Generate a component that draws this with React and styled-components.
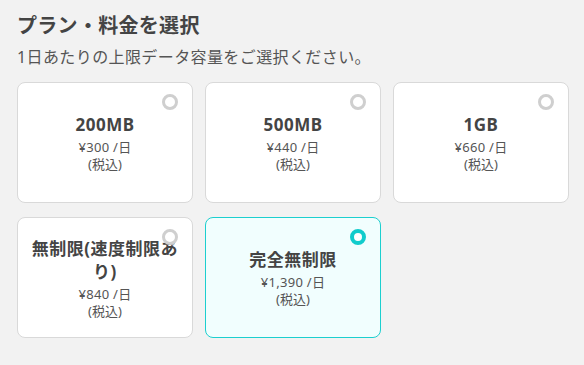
import React, { useState } from "react";
import styled, { createGlobalStyle } from "styled-components";

const GlobalStyle = createGlobalStyle`
  body {
    margin: 0;
    background: #f2f2f2;
    font-family: "Noto Sans", "Noto Sans CJK JP", sans-serif;
  }
`;

const Wrapper = styled.div`
  padding: 11px 14px 0 17px;
`;

const Title = styled.h2`
  margin: 0;
  font-size: 20px;
  line-height: 30px;
  font-weight: 700;
  letter-spacing: 0.3px;
  color: #444;
`;

const Lead = styled.p`
  margin: 3px 0 0;
  font-size: 16px;
  line-height: 26px;
  letter-spacing: 0.4px;
  color: #555;
`;

const Grid = styled.div`
  display: grid;
  grid-template-columns: repeat(3, 176px);
  grid-auto-rows: 121px;
  gap: 14px 12px;
  margin-top: 12px;
`;

const Card = styled.div`
  position: relative;
  box-sizing: border-box;
  display: flex;
  flex-direction: column;
  align-items: center;
  justify-content: center;
  padding: 0 10px;
  border-radius: 8px;
  border: 1px solid ${(p) => (p.$active ? "#1ccfcf" : "#d9d9d9")};
  background: ${(p) => (p.$active ? "#f1fefe" : "#fff")};
  text-align: center;
  cursor: pointer;
`;

const Radio = styled.span`
  position: absolute;
  top: 11px;
  right: 14px;
  box-sizing: border-box;
  width: 16px;
  height: 16px;
  border-radius: 50%;
  border: ${(p) => (p.$active ? "4px solid #12cccc" : "3px solid #cfcfcf")};
  background: #fff;
`;

const PlanName = styled.div`
  font-size: 17px;
  line-height: 23px;
  font-weight: 700;
  letter-spacing: 0.5px;
  color: #444;
`;

const Price = styled.div`
  margin-top: 3px;
  font-size: 13px;
  line-height: 17px;
  letter-spacing: 0.3px;
  color: #555;
`;

const Tax = styled.div`
  font-size: 13px;
  line-height: 16px;
  color: #555;
`;

const plans = [
  { name: "200MB", price: "¥300 /日" },
  { name: "500MB", price: "¥440 /日" },
  { name: "1GB", price: "¥660 /日" },
  { name: "無制限(速度制限あり)", price: "¥840 /日" },
  { name: "完全無制限", price: "¥1,390 /日" },
];

export default function App() {
  const [selected, setSelected] = useState(4);
  return (
    <Wrapper>
      <GlobalStyle />
      <Title>プラン・料金を選択</Title>
      <Lead>1日あたりの上限データ容量をご選択ください。</Lead>
      <Grid>
        {plans.map((plan, i) => (
          <Card key={plan.name} $active={selected === i} onClick={() => setSelected(i)}>
            <Radio $active={selected === i} />
            <PlanName>{plan.name}</PlanName>
            <Price>{plan.price}</Price>
            <Tax>(税込)</Tax>
          </Card>
        ))}
      </Grid>
    </Wrapper>
  );
}
